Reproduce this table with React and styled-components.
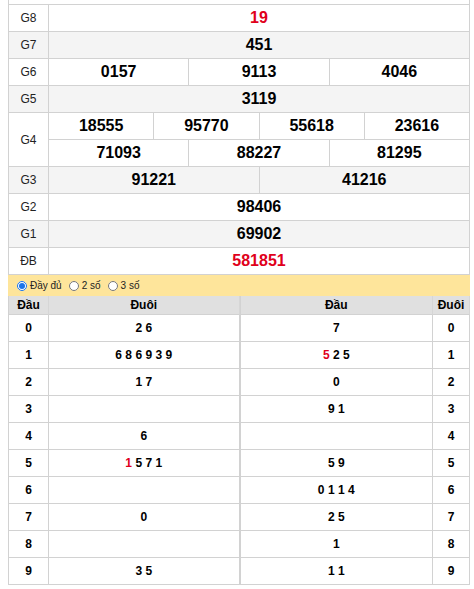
import React from "react";
import styled, { createGlobalStyle } from "styled-components";

const prizes = [
  { label: "G8", rows: [["19"]], red: true },
  { label: "G7", rows: [["451"]] },
  { label: "G6", rows: [["0157", "9113", "4046"]] },
  { label: "G5", rows: [["3119"]] },
  { label: "G4", rows: [["18555", "95770", "55618", "23616"], ["71093", "88227", "81295"]] },
  { label: "G3", rows: [["91221", "41216"]] },
  { label: "G2", rows: [["98406"]] },
  { label: "G1", rows: [["69902"]] },
  { label: "ĐB", rows: [["581851"]], red: true },
];

// red = index of the digit coming from the special prize
const dau = [
  { d: "0", tails: ["2", "6"] },
  { d: "1", tails: ["6", "8", "6", "9", "3", "9"] },
  { d: "2", tails: ["1", "7"] },
  { d: "3", tails: [] },
  { d: "4", tails: ["6"] },
  { d: "5", tails: ["1", "5", "7", "1"], red: 0 },
  { d: "6", tails: [] },
  { d: "7", tails: ["0"] },
  { d: "8", tails: [] },
  { d: "9", tails: ["3", "5"] },
];

const duoi = [
  { d: "0", heads: ["7"] },
  { d: "1", heads: ["5", "2", "5"], red: 0 },
  { d: "2", heads: ["0"] },
  { d: "3", heads: ["9", "1"] },
  { d: "4", heads: [] },
  { d: "5", heads: ["5", "9"] },
  { d: "6", heads: ["0", "1", "1", "4"] },
  { d: "7", heads: ["2", "5"] },
  { d: "8", heads: ["1"] },
  { d: "9", heads: ["1", "1"] },
];

const GlobalStyle = createGlobalStyle`
  body {
    margin: 0;
    background: #fff;
    font-family: "Liberation Sans", Arial, sans-serif;
    color: #000;
  }
`;

const Page = styled.div`
  padding: 0 4px 0 8px;
  width: 474px;
  box-sizing: border-box;
`;

const Results = styled.div`
  border-left: 1px solid #d2d2d2;
`;

const Stub = styled.div`
  height: 5px;
  box-sizing: border-box;
  border-bottom: 1px solid #d2d2d2;
  border-right: 1px solid #d2d2d2;
`;

const PrizeRow = styled.div`
  display: flex;
  background: ${(p) => (p.$alt ? "#f4f4f4" : "#fff")};
`;

const Label = styled.div`
  width: 40px;
  flex: none;
  box-sizing: border-box;
  border-right: 1px solid #d2d2d2;
  border-bottom: 1px solid #d2d2d2;
  display: flex;
  align-items: center;
  justify-content: center;
  font-size: 12px;
  color: #222;
`;

const Numbers = styled.div`
  flex: 1;
  display: flex;
  flex-direction: column;
`;

const NumberLine = styled.div`
  display: flex;
  height: 27px;
`;

const Num = styled.div`
  flex: 1;
  box-sizing: border-box;
  border-right: 1px solid #d2d2d2;
  border-bottom: 1px solid #d2d2d2;
  display: flex;
  align-items: center;
  justify-content: center;
  font-size: 16px;
  font-weight: bold;
  color: ${(p) => (p.$red ? "#e0001b" : "#000")};
`;

const Options = styled.div`
  height: 21px;
  background: #fee59b;
  display: flex;
  align-items: center;
  gap: 7px;
  padding-left: 9px;
  font-size: 10px;
  color: #222;
`;

const Option = styled.label`
  display: flex;
  align-items: center;
  gap: 3px;

  input {
    width: 10px;
    height: 10px;
    margin: 0;
    accent-color: #1a73e8;
  }
`;

const Loto = styled.div`
  display: flex;
`;

const LotoTable = styled.div`
  width: ${(p) => p.$width}px;
  border-left: 1px solid #d2d2d2;
`;

const LotoRow = styled.div`
  display: grid;
  grid-template-columns: ${(p) => p.$cols};
  height: ${(p) => (p.$head ? 19 : 27)}px;
  background: ${(p) => (p.$head ? "#e0e0e0" : "#fff")};
`;

const Cell = styled.div`
  box-sizing: border-box;
  border-right: 1px solid ${(p) => (p.$head ? "#d6d6d6" : "#d2d2d2")};
  border-bottom: 1px solid #d2d2d2;
  display: flex;
  align-items: center;
  justify-content: center;
  font-size: 12px;
  font-weight: bold;
  white-space: pre;
`;

const Red = styled.span`
  color: #e0001b;
`;

const Digits = ({ list, red }) => (
  <span>
    {list.map((n, i) => (
      <React.Fragment key={i}>
        {i > 0 && " "}
        {i === red ? <Red>{n}</Red> : n}
      </React.Fragment>
    ))}
  </span>
);

export default function App() {
  return (
    <Page>
      <GlobalStyle />
      <Results>
        <Stub />
        {prizes.map((p, i) => (
          <PrizeRow key={p.label} $alt={i % 2 === 1}>
            <Label>{p.label}</Label>
            <Numbers>
              {p.rows.map((line, j) => (
                <NumberLine key={j}>
                  {line.map((n) => (
                    <Num key={n} $red={p.red}>
                      {n}
                    </Num>
                  ))}
                </NumberLine>
              ))}
            </Numbers>
          </PrizeRow>
        ))}
      </Results>
      <Options>
        <Option>
          <input type="radio" name="mode" defaultChecked />
          Đầy đủ
        </Option>
        <Option>
          <input type="radio" name="mode" />2 số
        </Option>
        <Option>
          <input type="radio" name="mode" />3 số
        </Option>
      </Options>
      <Loto>
        <LotoTable $width={232}>
          <LotoRow $head $cols="40px 1fr">
            <Cell $head>Đầu</Cell>
            <Cell $head>Đuôi</Cell>
          </LotoRow>
          {dau.map((r) => (
            <LotoRow key={r.d} $cols="40px 1fr">
              <Cell>{r.d}</Cell>
              <Cell>
                <Digits list={r.tails} red={r.red} />
              </Cell>
            </LotoRow>
          ))}
        </LotoTable>
        <LotoTable $width={231}>
          <LotoRow $head $cols="1fr 37px">
            <Cell $head>Đầu</Cell>
            <Cell $head>Đuôi</Cell>
          </LotoRow>
          {duoi.map((r) => (
            <LotoRow key={r.d} $cols="1fr 37px">
              <Cell>
                <Digits list={r.heads} red={r.red} />
              </Cell>
              <Cell>{r.d}</Cell>
            </LotoRow>
          ))}
        </LotoTable>
      </Loto>
    </Page>
  );
}
